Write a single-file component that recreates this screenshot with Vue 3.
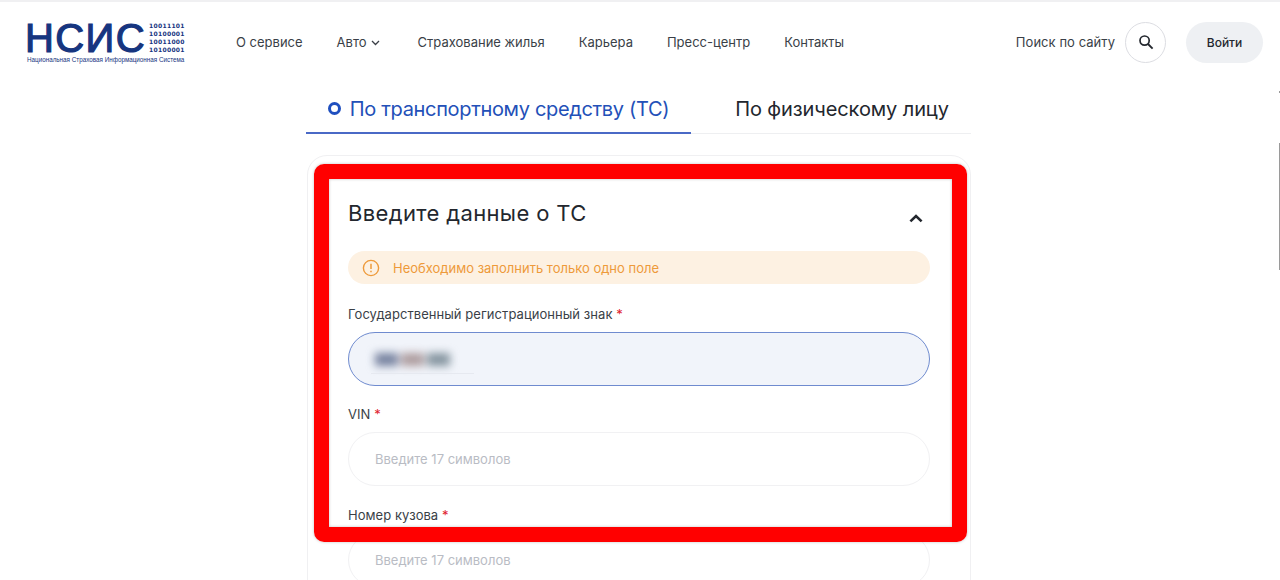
<template>
  <div class="page">
    <header class="top">
      <a class="logo" href="#">
        <div class="logo-row">
          <span class="logo-mark">НСИС</span>
          <span class="logo-bits">
            <span v-for="(b, i) in bits" :key="i">{{ b }}</span>
          </span>
        </div>
        <span class="logo-sub">Национальная Страховая Информационная Система</span>
      </a>

      <nav class="nav">
        <a v-for="item in nav" :key="item.title" href="#" class="nav-link">
          {{ item.title }}
          <svg v-if="item.drop" class="nav-arrow" width="9" height="6" viewBox="0 0 9 6">
            <path d="M1 1l3.5 3.5L8 1" fill="none" stroke="#3a3f47" stroke-width="1.3" />
          </svg>
        </a>
      </nav>

      <div class="search">
        <span>Поиск по сайту</span>
        <button type="button" class="search-btn">
          <svg width="18" height="18" viewBox="0 0 18 18">
            <circle cx="7.6" cy="7.6" r="4.6" fill="none" stroke="#23272e" stroke-width="1.7" />
            <path d="M11 11l4.6 4.6" stroke="#23272e" stroke-width="1.9" />
          </svg>
        </button>
      </div>
      <button type="button" class="login">Войти</button>
    </header>

    <main class="content">
      <div class="tabs">
        <div class="tab tab--active"><i class="tab-dot"></i>По транспортному средству (ТС)</div>
        <div class="tab tab--second">По физическому лицу</div>
      </div>

      <section class="card">
        <div class="card-head">
          <h2>Введите данные о ТС</h2>
          <svg width="16" height="10" viewBox="0 0 16 10">
            <path d="M2.4 8.4L8 3l5.6 5.4" fill="none" stroke="#23272e" stroke-width="2.6" />
          </svg>
        </div>

        <div class="notice">
          <svg width="18" height="18" viewBox="0 0 18 18">
            <circle cx="9" cy="9" r="7.6" fill="none" stroke="#ee9a3a" stroke-width="1.4" />
            <path d="M9 4.8v5.2M9 11.8v1.5" stroke="#ee9a3a" stroke-width="1.5" />
          </svg>
          Необходимо заполнить только одно поле
        </div>

        <div class="field">
          <label>Государственный регистрационный знак <b>*</b></label>
          <div class="input input--filled">
            <span class="plate">
              <i style="background:#76829f"></i>
              <i style="background:#ad9c9e"></i>
              <i style="background:#84949f"></i>
            </span>
            <span class="plate-line"></span>
          </div>
        </div>

        <div v-for="f in fields" :key="f" class="field">
          <label>{{ f }} <b>*</b></label>
          <input class="input" type="text" placeholder="Введите 17 символов" />
        </div>
      </section>

      <div class="red-frame"></div>
    </main>

    <i class="edge-mark"></i>
    <i class="edge-line"></i>
  </div>
</template>

<script setup>
const bits = ["10011101", "10100001", "10011000", "10100001"];

const nav = [
  { title: "О сервисе" },
  { title: "Авто", drop: true },
  { title: "Страхование жилья" },
  { title: "Карьера" },
  { title: "Пресс-центр" },
  { title: "Контакты" },
];

const fields = ["VIN", "Номер кузова"];
</script>

<style>
html,
body {
  overflow: hidden;
  background: #fff;
}
</style>

<style scoped>
.page {
  position: relative;
  height: 580px;
  overflow: hidden;
  font-family: "Inter", "Noto Sans", sans-serif;
  color: #23272e;
  background: #fff;
}

.top {
  display: flex;
  align-items: center;
  height: 80px;
  margin-bottom: 2px;
  padding: 0 17px 0 27px;
  border-top: 2px solid #f0f0f2;
}

.logo {
  display: flex;
  flex-direction: column;
  width: 160px;
  margin-top: 2px;
  text-decoration: none;
  color: #16357f;
}
.logo-row {
  display: flex;
  align-items: center;
  gap: 3px;
  height: 30px;
}
.logo-mark {
  margin-left: -2px;
  font-family: "Liberation Sans", sans-serif;
  font-size: 40px;
  line-height: 30px;
  letter-spacing: 1.4px;
  color: #16357f;
  -webkit-text-stroke: 1.2px #16357f;
}
.logo-bits {
  display: flex;
  flex-direction: column;
  font-family: "DejaVu Sans", sans-serif;
  font-size: 6px;
  font-weight: 700;
  line-height: 8px;
  letter-spacing: 0.3px;
}
.logo-sub {
  margin-top: 3px;
  font-family: "Liberation Sans", sans-serif;
  font-size: 6.3px;
  line-height: 8px;
  white-space: nowrap;
}

.nav {
  display: flex;
  gap: 34px;
  margin-left: 49px;
}
.nav-link {
  display: flex;
  align-items: center;
  gap: 5px;
  font-size: 13px;
  text-decoration: none;
  color: #3a3f47;
}
.nav-arrow {
  margin: 2px 4px 0 -1px;
}

.search {
  display: flex;
  align-items: center;
  gap: 10px;
  margin-left: auto;
  font-size: 13px;
  letter-spacing: 0.05px;
  color: #3a3f47;
}
.search-btn {
  display: flex;
  align-items: center;
  justify-content: center;
  width: 41px;
  height: 41px;
  padding: 0;
  border: 1px solid #dcdde2;
  border-radius: 50%;
  background: #fff;
}
.login {
  width: 77px;
  height: 41px;
  margin-left: 20px;
  border: none;
  border-radius: 21px;
  background: #eef0f3;
  font-family: inherit;
  font-size: 12px;
  font-weight: 500;
  color: #23272e;
}

.content {
  position: relative;
  width: 665px;
  margin-left: 306px;
}

.tabs {
  display: grid;
  grid-template-columns: 385px 280px;
  height: 50px;
}
.tab {
  display: flex;
  align-items: center;
  justify-content: center;
  padding-top: 1px;
  box-sizing: border-box;
  border-bottom: 1px solid #eeeff1;
  font-size: 20px;
  letter-spacing: -0.1px;
  color: #23272e;
}
.tab--active {
  gap: 9px;
  border-bottom: 2px solid #4a69c6;
  letter-spacing: -0.33px;
  color: #2350b8;
}
.tab--second {
  padding-left: 22px;
}
.tab-dot {
  width: 13px;
  height: 13px;
  box-sizing: border-box;
  border: 3.5px solid #1f4fbf;
  border-radius: 50%;
}

.card {
  box-sizing: border-box;
  margin: 21px 0 0 1px;
  width: 664px;
  height: 600px;
  padding: 41px 40px 0;
  border: 1px solid #f0f0f2;
  border-radius: 20px;
}
.card-head {
  display: flex;
  align-items: center;
  justify-content: space-between;
  height: 34px;
  padding-right: 6px;
}
.card-head h2 {
  margin: 0 0 2px;
  font-size: 22px;
  font-weight: 400;
  letter-spacing: 0.36px;
  color: #23272e;
}
.card-head svg {
  margin-top: 7px;
}

.notice {
  display: flex;
  align-items: center;
  gap: 13px;
  height: 33px;
  margin-top: 20px;
  padding-left: 14px;
  border-radius: 17px;
  background: #fdf1e2;
  font-size: 13px;
  color: #ee9a3a;
}

.field {
  margin-top: 22px;
}
.field + .field {
  margin-top: 20px;
}
.field:last-child {
  margin-top: 21px;
}
.field label {
  display: block;
  height: 16px;
  margin-bottom: 10px;
  font-size: 13px;
  line-height: 16px;
  letter-spacing: 0.05px;
  color: #3a3f47;
}
.field b {
  font-weight: 400;
  color: #e0202c;
}

.input {
  display: block;
  box-sizing: border-box;
  width: 582px;
  height: 54px;
  padding: 0 26px;
  border: 1px solid #f1f1f3;
  border-radius: 27px;
  outline: none;
  background: #fff;
  font-family: inherit;
  font-size: 13px;
}
.input::placeholder {
  color: #b9bcc4;
}
.input--filled {
  position: relative;
  display: flex;
  align-items: center;
  border-color: #6f8bcf;
  background: #f1f4fa;
}
.plate {
  display: flex;
  gap: 3px;
  filter: blur(4px);
}
.plate i {
  display: block;
  width: 23px;
  height: 13px;
}
.plate-line {
  position: absolute;
  left: 22px;
  top: 40px;
  width: 103px;
  height: 1px;
  background: #e6e9f0;
}

/* красная рамка поверх скриншота */
.red-frame {
  position: absolute;
  left: 8px;
  top: 80px;
  box-sizing: border-box;
  width: 653px;
  height: 378px;
  border: 15px solid #ff0000;
  border-radius: 10px;
  box-shadow: 0 0 3px rgba(0, 0, 0, 0.25), inset 0 0 3px rgba(0, 0, 0, 0.25);
}

/* обрезанный край полосы прокрутки справа */
.edge-mark,
.edge-line {
  position: absolute;
  right: 0;
  width: 1px;
  background: #9a9a9a;
}
.edge-mark {
  top: 91px;
  height: 2px;
}
.edge-line {
  top: 143px;
  height: 127px;
}
</style>
